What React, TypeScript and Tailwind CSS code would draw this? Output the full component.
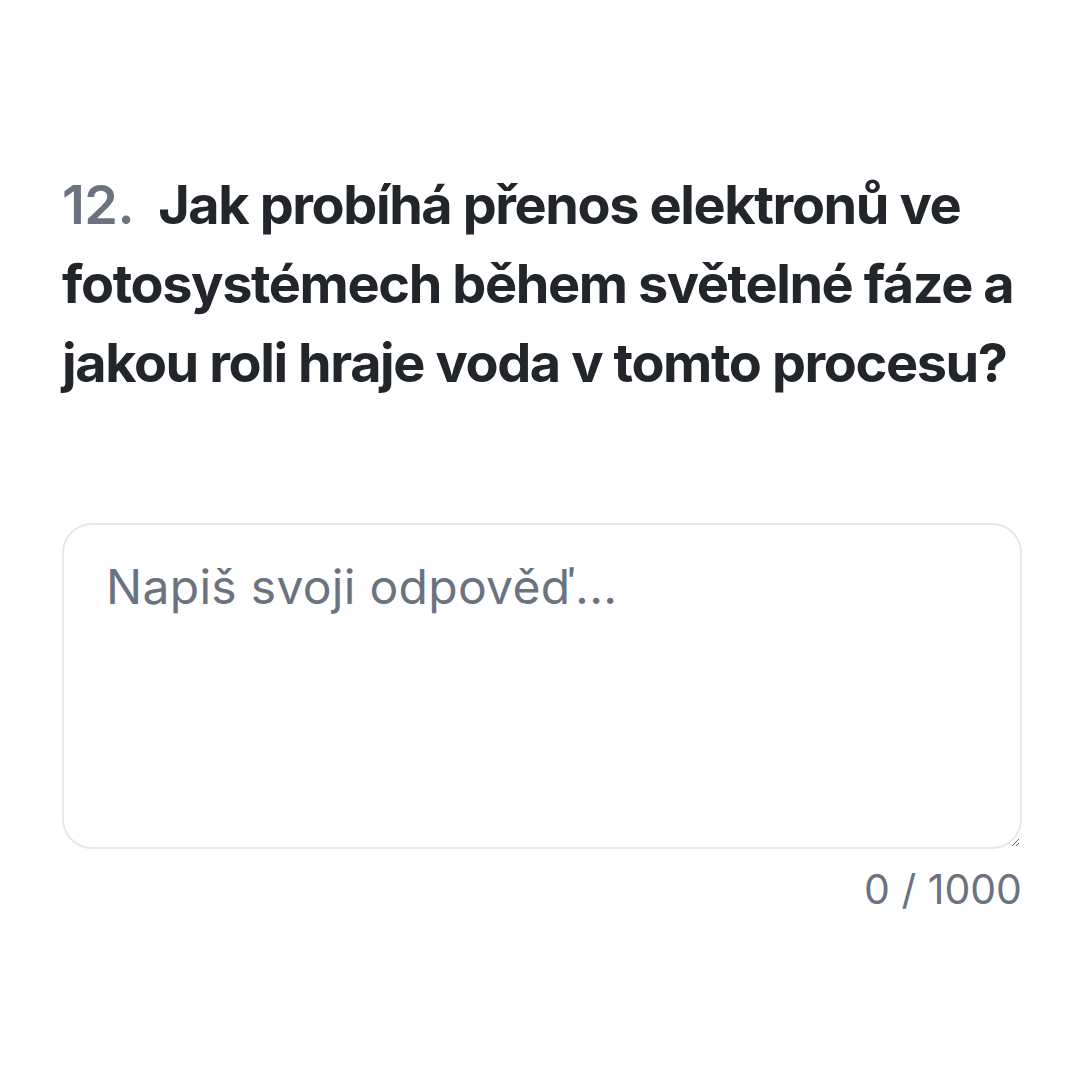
import React from "react";

export default function App() {
  return (
    <div className="min-h-screen w-full bg-white" style={{ fontFamily: "Inter, 'Noto Sans', sans-serif" }}>
      <div className="px-[62px] pt-[165px]">
        <h2 className="text-[54px] leading-[79px] font-bold text-[#22262b]">
          <span className="text-[#6b7280] font-semibold tracking-[-0.5px]">12.</span>
          <span className="ml-[24px] tracking-[-1.4px]">
            Jak probíhá přenos elektronů ve fotosystémech během světelné fáze a jakou roli hraje voda v tomto procesu?
          </span>
        </h2>
        <div className="mt-[121px]">
          <textarea
            className="block w-[960px] h-[326px] resize-y rounded-[30px] border-[2.5px] border-[#e5e7eb] px-[42px] py-[30px] text-[48px] leading-[64px] tracking-[0.3px] text-[#22262b] placeholder:text-[#6b7280] outline-none"
            placeholder="Napiš svoji odpověď..."
          />
        </div>
        <div className="mt-[15px] w-[960px] text-right text-[41px] leading-[50px] text-[#6b7280]">0 / 1000</div>
      </div>
    </div>
  );
}
